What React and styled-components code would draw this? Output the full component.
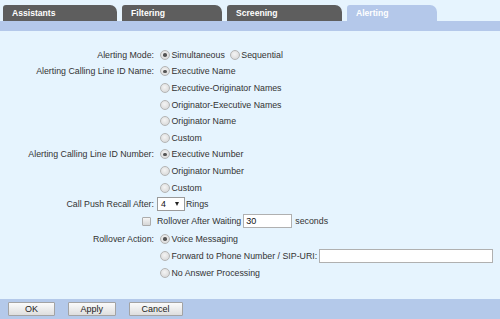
import React from 'react';
import styled, { createGlobalStyle } from 'styled-components';

const GlobalStyle = createGlobalStyle`
  html, body {
    margin: 0;
    padding: 0;
  }
  body {
    font-family: 'Liberation Sans', Arial, sans-serif;
    background: #e6f4fe;
  }
`;

//Tabs
const tabs = [
  { name: 'Assistants', width: 114 },
  { name: 'Filtering', width: 100 },
  { name: 'Screening', width: 115 },
  { name: 'Alerting', width: 90, active: true },
];

const Option = ({ checked, children }) => (
  <OptionWrap>
    <Radio $checked={checked} />
    <span>{children}</span>
  </OptionWrap>
);

const App = () => {
  return (
    <>
      <GlobalStyle />
      <Page>
        <TabBar>
          {tabs.map(tab => (
            <Tab key={tab.name} $width={tab.width} $active={tab.active}>
              {tab.name}
            </Tab>
          ))}
        </TabBar>
        <Strip />
        <Content>
          <Row>
            <Label>Alerting Mode:</Label>
            <Value>
              <Option checked>Simultaneous</Option>
              <Option>Sequential</Option>
            </Value>
          </Row>

          <Row>
            <Label>Alerting Calling Line ID Name:</Label>
            <Value>
              <Option checked>Executive Name</Option>
            </Value>
          </Row>
          <Row>
            <Label />
            <Value>
              <Option>Executive-Originator Names</Option>
            </Value>
          </Row>
          <Row>
            <Label />
            <Value>
              <Option>Originator-Executive Names</Option>
            </Value>
          </Row>
          <Row>
            <Label />
            <Value>
              <Option>Originator Name</Option>
            </Value>
          </Row>
          <Row>
            <Label />
            <Value>
              <Option>Custom</Option>
            </Value>
          </Row>

          <Row>
            <Label>Alerting Calling Line ID Number:</Label>
            <Value>
              <Option checked>Executive Number</Option>
            </Value>
          </Row>
          <Row>
            <Label />
            <Value>
              <Option>Originator Number</Option>
            </Value>
          </Row>
          <Row>
            <Label />
            <Value>
              <Option>Custom</Option>
            </Value>
          </Row>

          <Row>
            <Label>Call Push Recall After:</Label>
            <Value>
              <SelectBox>
                <span>4</span>
                <Arrow />
              </SelectBox>
              <span>Rings</span>
            </Value>
          </Row>

          <Row $height={18}>
            <Label>
              <Checkbox />
            </Label>
            <Value>
              <span>Rollover After Waiting</span>
              <TextInput $width={49} defaultValue='30' />
              <span>seconds</span>
            </Value>
          </Row>

          <Row $height={17.6}>
            <Label>Rollover Action:</Label>
            <Value>
              <Option checked>Voice Messaging</Option>
            </Value>
          </Row>
          <Row $height={16.8}>
            <Label />
            <Value>
              <Option>Forward to Phone Number / SIP-URI:</Option>
              <TextInput $width={174} $flush />
            </Value>
          </Row>
          <Row>
            <Label />
            <Value>
              <Option>No Answer Processing</Option>
            </Value>
          </Row>
        </Content>
        <Footer>
          <Button>OK</Button>
          <Button>Apply</Button>
          <Button>Cancel</Button>
        </Footer>
      </Page>
    </>
  );
};

const Page = styled.div`
  width: 500px;
  height: 319px;
  display: flex;
  flex-direction: column;
  background: #e6f4fe;
  overflow: hidden;
`;

const TabBar = styled.div`
  display: flex;
  gap: 5px;
  padding: 5px 0 0 3px;
  height: 16px;
`;

const Tab = styled.div`
  width: ${p => p.$width}px;
  height: 16px;
  box-sizing: border-box;
  padding-left: 9px;
  display: flex;
  align-items: center;
  background: ${p => (p.$active ? '#b4c8ea' : '#5e5e5e')};
  color: #fff;
  font-weight: bold;
  font-size: 8.6px;
  border-radius: 3px 7px 0 0;
`;

const Strip = styled.div`
  height: 10px;
  background: #b4c8ea;
`;

const Content = styled.div`
  flex: 1;
  padding-top: 15.5px;
  display: flex;
  flex-direction: column;
  font-size: 8.8px;
  color: #333;
`;

const Row = styled.div`
  display: grid;
  grid-template-columns: 154px 1fr;
  column-gap: 3px;
  align-items: center;
  height: ${p => p.$height || 16.6}px;
`;

const Label = styled.div`
  white-space: nowrap;
  display: flex;
  justify-content: flex-end;
  align-items: center;
`;

const Value = styled.div`
  display: flex;
  align-items: center;
  white-space: nowrap;
`;

const OptionWrap = styled.label`
  display: inline-flex;
  align-items: center;
  margin-right: 2px;
`;

const Radio = styled.span`
  width: 10px;
  height: 10px;
  box-sizing: border-box;
  border-radius: 50%;
  border: 1px solid #b4b4b4;
  background: radial-gradient(circle at 45% 40%, #f4f4f4 0%, #d6d6d6 90%);
  margin: 0 1.5px 0 3px;
  position: relative;
  &::after {
    content: '';
    display: ${p => (p.$checked ? 'block' : 'none')};
    position: absolute;
    left: 2.25px;
    top: 2.25px;
    width: 3.5px;
    height: 3.5px;
    border-radius: 50%;
    background: #555;
  }
`;

const Checkbox = styled.span`
  width: 9px;
  height: 9px;
  box-sizing: border-box;
  border: 1px solid #acacac;
  border-radius: 1px;
  background: linear-gradient(#f6f6f6, #d6d6d6);
  margin-right: 3px;
`;

const SelectBox = styled.div`
  width: 28px;
  height: 14px;
  box-sizing: border-box;
  border: 1px solid #9a9a9a;
  background: #fff;
  display: flex;
  align-items: center;
  justify-content: space-between;
  padding: 0 5px 0 3px;
  margin-right: 1px;
  color: #111;
`;

const Arrow = styled.span`
  width: 0;
  height: 0;
  border-left: 2.5px solid transparent;
  border-right: 2.5px solid transparent;
  border-top: 4px solid #222;
`;

const TextInput = styled.input`
  width: ${p => p.$width}px;
  height: 14px;
  box-sizing: border-box;
  border: 1px solid #b0b0b0;
  background: #fff;
  font-family: inherit;
  font-size: 9px;
  color: #111;
  padding: 0 2px;
  margin: 0 3px 0 ${p => (p.$flush ? '0' : '2px')};
  outline: none;
`;

const Footer = styled.div`
  height: 20px;
  background: #b4c9ea;
  display: flex;
  align-items: center;
  gap: 12.5px;
  padding-left: 8px;
`;

const Button = styled.button`
  min-width: 47px;
  height: 14px;
  box-sizing: border-box;
  padding: 0 12px;
  border: 1px solid #a3a3a3;
  border-radius: 1px;
  background: linear-gradient(#fbfbfb, #dedede);
  font-family: inherit;
  font-size: 9px;
  color: #222;
  line-height: 12px;
`;

export default App;
